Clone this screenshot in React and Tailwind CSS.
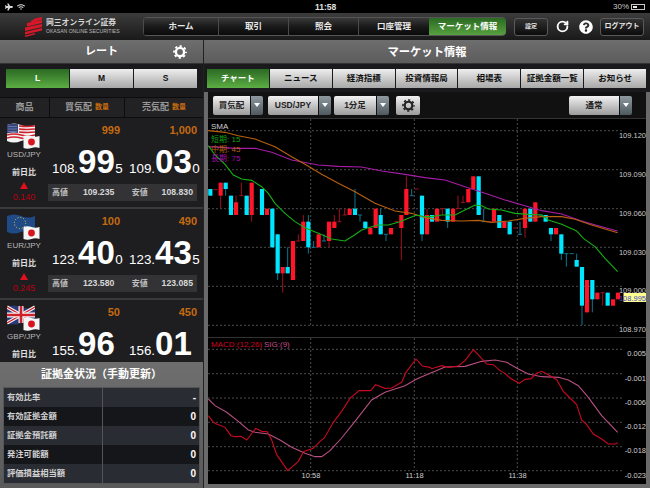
import React from "react";
import { FaPlane, FaWifi, FaQuestionCircle } from "react-icons/fa";
import { RotateCw } from "lucide-react";

// chart points were read off at 3x, so they go through these to page coordinates
const left = ([x, y]) => [205 + x / 3, 115 + y / 3];
const right = ([x, y]) => [425 + x / 3, 115 + y / 3];
const lowLeft = ([x, y]) => [205 + x / 3, 335 + y / 3];
const lowRight = ([x, y]) => [425 + x / 3, 335 + y / 3];
const toLine = (pts) => pts.map((p) => p.join(",")).join(" ");

const greenLine = [
  ...[[10,92],[30,120],[60,148],[85,180],[110,192],[140,196],[170,215],[190,235],[210,265],[240,295],[270,320],[300,338],[340,355],[380,372],[420,378],[445,362],[470,345],[490,338],[520,330],[550,330],[585,320],[610,310],[635,300],[660,305]].map(left),
  ...[[20,305],[50,300],[90,300],[120,285],[150,270],[170,272],[190,282],[230,285],[270,295],[310,298],[350,300],[370,315],[410,328],[455,348],[475,370],[510,395],[540,430],[578,470]].map(right),
];
const orangeLine = [
  ...[[10,47],[60,52],[100,62],[150,72],[210,95],[260,125],[300,148],[350,178],[400,205],[450,230],[510,265],[570,288],[620,295],[660,308]].map(left),
  ...[[50,316],[110,318],[160,316],[200,322],[250,318],[300,310],[350,305],[410,305],[450,313],[500,330],[578,353]].map(right),
];
const purpleLine = [
  ...[[10,95],[90,100],[150,100],[200,112],[260,135],[340,150],[400,154],[470,156],[530,168],[600,178],[660,188]].map(left),
  ...[[60,195],[120,215],[180,235],[240,255],[300,272],[350,287],[410,297],[470,318],[530,335],[578,348]].map(right),
];
const macdLine = [
  ...[[10,245],[25,265],[35,270],[60,280],[78,305],[90,308],[108,307],[125,318],[152,283],[170,292],[187,293],[200,318],[215,362],[248,410],[280,382],[295,353],[325,343],[345,322],[358,312],[385,265],[410,232],[435,193],[462,170],[497,170],[512,152],[540,163],[560,162],[590,145],[603,115],[633,75],[652,96],[675,100]].map(lowLeft),
  ...[[20,104],[50,95],[70,100],[100,96],[120,80],[145,47],[165,68],[185,90],[205,92],[225,110],[240,118],[255,132],[283,148],[300,136],[318,134],[335,118],[350,112],[370,122],[395,137],[415,172],[435,192],[455,212],[470,258],[485,272],[505,300],[530,315],[550,330],[570,330],[578,326]].map(lowRight),
];
const sigLine = [
  ...[[10,195],[30,215],[65,235],[100,262],[130,288],[150,295],[190,300],[225,318],[260,340],[300,358],[330,368],[350,368],[375,350],[410,312],[450,262],[500,198],[540,175],[600,155],[635,135],[675,118]].map(lowLeft),
  ...[[30,112],[60,99],[120,97],[170,82],[210,78],[245,85],[280,105],[310,120],[350,128],[400,130],[430,138],[460,155],[490,190],[530,245],[578,295]].map(lowRight),
];

// color, x, body top, body bottom, wick top, wick bottom
const candlesLeft = [
  ["c",16,222,242,222,242],["r",31,224,224,224,224],["r",47,203,242,203,280],["c",62,203,222,203,242],["c",78,242,300,242,300],
  ["r",93,262,300,242,300],["r",109,242,242,203,242],["c",125,242,300,242,300],["r",140,203,300,203,320],["c",171,222,300,222,300],
  ["r",186,281,300,281,300],["c",202,281,397,281,397],["c",218,358,475,358,495],["r",233,456,475,456,533],["c",248,456,475,397,475],
  ["r",264,378,495,378,495],["r",280,378,378,358,378],["r",295,320,378,300,378],["c",310,320,397,300,416],["c",326,397,397,378,397],
  ["r",341,358,397,358,397],["c",357,378,378,358,378],["r",372,320,378,320,397],["r",388,320,339,300,339],["r",403,320,320,280,320],
  ["r",419,300,300,281,300],["r",434,281,300,281,300],["c",450,281,300,222,300],["c",465,300,300,300,320],["c",481,320,339,320,339],
  ["r",496,339,358,339,358],["r",512,281,339,281,339],["c",527,300,358,281,358],["c",543,358,358,358,378],["r",558,339,358,339,358],
  ["r",574,320,320,320,320],["r",589,300,339,300,435],["r",604,222,300,184,300],["c",620,242,242,222,242],["r",635,222,222,222,222],
  ["c",651,242,358,242,378],["r",666,300,358,281,358],
];
const candlesRight = [
  ["c",21,300,320,300,320],["r",36,281,320,281,320],["r",52,281,281,281,300],["c",68,281,320,281,339],["r",84,281,320,281,320],
  ["r",99,281,281,242,281],["r",114,262,262,242,262],["r",130,222,262,222,262],["r",145,184,222,184,222],["c",161,184,300,184,300],
  ["c",176,320,320,281,320],["r",192,320,320,320,320],["r",207,281,320,281,320],["c",223,300,339,300,339],["r",238,320,339,320,339],
  ["c",254,320,358,320,358],["r",270,339,339,339,339],["c",285,358,358,320,358],["r",300,281,339,281,368],["c",316,281,320,281,320],
  ["r",331,262,320,262,320],["c",347,300,300,300,300],["c",362,300,320,300,320],["c",378,339,358,339,378],["r",393,339,358,339,358],
  ["c",409,358,416,358,435],["c",424,416,416,416,455],["c",440,416,416,416,416],["c",455,435,455,416,455],["c",471,456,572,456,630],
  ["r",486,495,592,495,592],["c",502,495,553,495,592],["r",517,533,553,533,553],["r",533,533,533,533,572],["c",548,533,572,533,572],
  ["r",564,553,572,553,572],["r",579,533,553,533,553],
];

const Candles = ({ data, x0 }) =>
  data.map(([c, x, top, bot, wt, wb], i) => {
    const px = x0 + x / 3;
    const y = (v) => 115 + v / 3;
    const body = c === "r" ? "#ff1428" : "#00e6ff";
    const wick = c === "r" ? "#a01020" : "#0e7590";
    return (
      <g key={i}>
        {wt !== wb && <line x1={px} x2={px} y1={y(wt)} y2={y(wb)} stroke={wick} strokeWidth="1" />}
        {top === bot ? (
          <line x1={px - 2} x2={px + 2} y1={y(top)} y2={y(top)} stroke={wick} strokeWidth="1" />
        ) : (
          <rect x={px - 2.1} y={y(top)} width="4.2" height={y(bot) - y(top)} fill={body} />
        )}
      </g>
    );
  });

const Grid = ({ ys, x0, x1, y0, y1 }) => (
  <g stroke="#4c4c4c" strokeWidth="1" strokeDasharray="2 2">
    {ys.map((y) => (
      <line key={y} x1={x0} x2={x1} y1={y} y2={y} />
    ))}
    {[310.7, 414.3, 517.3].map((x) => (
      <line key={x} x1={x} x2={x} y1={y0} y2={y1} />
    ))}
  </g>
);

const Gear = ({ className, color = "#fff" }) => (
  <svg viewBox="0 0 24 24" className={className}>
    <circle cx="12" cy="12" r="7" fill="none" stroke={color} strokeWidth="4" />
    <circle cx="12" cy="12" r="10.2" fill="none" stroke={color} strokeWidth="3" strokeDasharray="4 4" strokeDashoffset="2" />
  </svg>
);

const Logo = () => (
  <svg viewBox="0 0 18 20" className="w-[18px] h-[20px] shrink-0">
    <polygon points="11,1.5 18,0 18,2.5 7,5.5 7,4" fill="#d81828" />
    <polygon points="3,6 18,3 18,6 3,9.5" fill="#d81828" />
    <polygon points="1,10.5 18,7 18,10 1,14" fill="#d81828" />
    <polygon points="1,15 18,11 18,13.5 1,17.5" fill="#d81828" />
    <polygon points="1,18.5 11,16 11,17.5 1,20" fill="#d81828" />
  </svg>
);

const JpFlag = () => (
  <svg viewBox="0 0 16 14" className="absolute left-[23px] top-[12px] w-[17px] h-[14px]">
    <path d="M0 1 Q4 -0.5 8 1 T16 1 V13 Q12 11.5 8 13 T0 13 Z" fill="#f4f4f4" />
    <circle cx="8" cy="7" r="3.4" fill="#d8141e" />
  </svg>
);

const UsFlag = () => (
  <svg viewBox="0 0 28 20" className="w-[28px] h-[20px]">
    <path d="M0 2 Q7 -1 14 2 T28 2 V18 Q21 15 14 18 T0 18 Z" fill="#f4f4f4" />
    <g stroke="#d0202c" strokeWidth="1.5" fill="none">
      <path d="M12 3 Q20 4 28 3" />
      <path d="M12 6 Q20 7 28 6" />
      <path d="M12 9 Q20 10 28 9" />
      <path d="M0 12 Q7 10 14 12 T28 12" />
      <path d="M0 15 Q7 13 14 15 T28 15" />
    </g>
    <path d="M0 2 Q6 0 11 1.2 V10 Q6 9 0 10.5 Z" fill="#35467e" />
    <path d="M1.5 3.5 H10 M1.5 6 H10 M1.5 8.5 H10" stroke="#a8b0d0" strokeWidth="0.9" strokeDasharray="1 1" />
  </svg>
);

const EuFlag = () => (
  <svg viewBox="0 0 28 20" className="w-[28px] h-[20px]">
    <path d="M0 2 Q7 -1 14 2 T28 2 V18 Q21 15 14 18 T0 18 Z" fill="#1f4a86" />
    <circle cx="13" cy="9" r="5.6" fill="none" stroke="#e8d040" strokeWidth="1" strokeDasharray="1 1.9" />
  </svg>
);

const GbFlag = () => (
  <svg viewBox="0 0 28 20" className="w-[28px] h-[20px]">
    <path d="M0 2 Q7 -1 14 2 T28 2 V18 Q21 15 14 18 T0 18 Z" fill="#2a3a78" />
    <path d="M0 2 L28 18 M28 2 L0 18" stroke="#f4f4f4" strokeWidth="3.4" />
    <path d="M0 2 L28 18 M28 2 L0 18" stroke="#d0202c" strokeWidth="1.2" />
    <path d="M14 1 V18 M0 10 H28" stroke="#f4f4f4" strokeWidth="5" />
    <path d="M14 1 V18 M0 10 H28" stroke="#d0202c" strokeWidth="2.6" />
  </svg>
);

const Price = ({ head, big, tail, w }) => (
  <div className={`flex items-baseline font-bold text-white ${w}`}>
    <span className="text-[13.4px] leading-none font-normal">{head}</span>
    <span className="text-[33px] leading-none tracking-[0.2px]">{big}</span>
    <span className="text-[13.4px] leading-none font-normal">{tail}</span>
  </div>
);

const RateRow = ({ flag, pair, sellQty, buyQty, sell, buy, change, high, low, cut }) => (
  <div className={`flex shrink-0 bg-[#1e1e20] ${cut ? "h-[62px] overflow-hidden" : "h-[91px] border-b-2 border-[#3a3a3a]"}`}>
    <div className="w-[48px] flex flex-col items-center shrink-0 pt-[5px]">
      <div className="relative h-[25px] w-[40px] pl-[7px] self-start shrink-0">
        {flag}
        <JpFlag />
      </div>
      <div className="text-[8px] leading-[10px] text-[#b8b8b8] mt-[2px] shrink-0">{pair}</div>
      <div className="text-[8px] leading-[11px] font-bold text-[#e0e0e0] mt-[7px] shrink-0">前日比</div>
      {!cut && (
        <>
          <div className="w-0 h-0 border-l-[4px] border-r-[4px] border-b-[7px] border-l-transparent border-r-transparent border-b-[#e0101c] mt-[4px]" />
          <div className="text-[9px] leading-[10px] text-[#b80010] mt-[3px]">{change}</div>
        </>
      )}
    </div>
    <div className="flex-1 pt-[5px]">
      <div className="flex text-[11px] leading-[14px] font-bold text-[#c46a10]">
        <div className="w-[72px] text-right">{sellQty}</div>
        <div className="w-[77px] text-right">{buyQty}</div>
      </div>
      <div className="flex mt-[8px] ml-[4px] h-[33px]">
        <Price {...sell} w="w-[77px]" />
        <Price {...buy} w="w-[72px]" />
      </div>
      {!cut && (
        <div className="mt-[6px] w-[149px] h-[17px] bg-[#333335] flex items-center px-[4px] text-[8px] font-bold text-[#d8d8d8]">
          <span className="w-[31px] text-[#c0c0c0]">高値</span>
          <span className="w-[49px] text-[8.7px]">{high}</span>
          <span className="w-[30px] text-[#c0c0c0]">安値</span>
          <span className="text-[8.7px]">{low}</span>
        </div>
      )}
    </div>
  </div>
);

const Select = ({ label, w }) => (
  <div className={`flex h-[19px] rounded-[2px] overflow-hidden shrink-0 ${w}`}>
    <div className="flex-1 bg-linear-to-b from-[#f2f2f2] to-[#9c9c9c] text-[8.5px] font-bold text-[#222] flex items-center justify-center">
      {label}
    </div>
    <div className="w-[12px] ml-[1px] bg-linear-to-b from-[#8e9aa0] to-[#4e5a60] flex items-center justify-center">
      <div className="w-0 h-0 border-l-[3px] border-r-[3px] border-t-[4px] border-l-transparent border-r-transparent border-t-white" />
    </div>
  </div>
);

const navItems = [
  ["ホーム", "w-[75px]"],
  ["取引", "w-[70px]"],
  ["照会", "w-[70px]"],
  ["口座管理", "w-[71px]"],
];
const subTabs = ["ニュース", "経済指標", "投資情報局", "相場表", "証拠金額一覧", "お知らせ"];
const margins = [
  ["有効比率", "-"],
  ["有効証拠金額", "0"],
  ["証拠金預託額", "0"],
  ["発注可能額", "0"],
  ["評価損益相当額", "0"],
];

const mainLabels = [["109.120", 135], ["109.090", 174], ["109.060", 213], ["109.030", 252], ["109.000", 290.5], ["108.970", 329.5]];
const lowLabels = [["0.005", 354.5], ["-0.001", 379], ["-0.006", 403.5], ["-0.012", 427.5], ["-0.018", 451.5], ["-0.023", 476]];

const App = () => {
  return (
    <div className="w-[650px] h-[488px] overflow-hidden bg-black flex flex-col font-['Liberation_Sans','Noto_Sans_CJK_JP',sans-serif]">
      {/* status bar */}
      <div className="h-[13px] bg-black flex items-center justify-between px-[5px] text-[8px] text-[#c8c8c8] relative shrink-0">
        <div className="flex items-center gap-[4px] text-[#d8d8d8]">
          <FaPlane className="w-[8px] h-[8px]" />
          <FaWifi className="w-[8px] h-[8px]" />
        </div>
        <div className="absolute left-[315px] top-[1px] text-[8.5px] leading-[12px] font-bold text-[#e0e0e0]">11:58</div>
        <div className="flex items-center gap-[2px]">
          <span>30%</span>
          <div className="w-[14px] h-[6px] border border-[#c8c8c8] p-px">
            <div className="w-[4px] h-full bg-[#e8e8e8]" />
          </div>
        </div>
      </div>

      {/* header */}
      <div className="h-[27px] shrink-0 bg-linear-to-b from-[#3c3c3c] to-[#1a1a1a] flex items-center">
        <div className="w-[143px] pl-[24px] flex items-center gap-[4px] shrink-0">
          <Logo />
          <div className="flex flex-col">
            <span className="text-[7.8px] leading-[10px] font-bold text-[#d8d8d8] whitespace-nowrap">岡三オンライン証券</span>
            <span className="text-[5.1px] leading-[7px] text-[#b8b8b8] whitespace-nowrap">OKASAN ONLINE SECURITIES</span>
          </div>
        </div>
        <div className="flex h-[19px] rounded-[4px] overflow-hidden border-y border-[#555] shrink-0">
          {navItems.map(([t, w]) => (
            <div key={t} className={`${w} bg-linear-to-b from-[#3a3a3a] via-[#1a1a1a] to-[#0a0a0a] border-l border-[#4a4a4a] text-[8.5px] font-bold text-[#e8e8e8] flex items-center justify-center`}>
              {t}
            </div>
          ))}
          <div className="w-[77px] bg-linear-to-b from-[#2a6a22] to-[#58a040] text-[8.5px] font-bold text-white flex items-center justify-center">
            マーケット情報
          </div>
        </div>
        <div className="ml-[8px] w-[34px] h-[18px] rounded-[3px] border border-[#5a5a5a] bg-linear-to-b from-[#333] to-[#0c0c0c] text-[6px] font-bold text-[#e0e0e0] flex items-center justify-center shrink-0">
          設定
        </div>
        <RotateCw className="ml-[8px] w-[13px] h-[13px] text-white shrink-0" strokeWidth={3.5} />
        <FaQuestionCircle className="ml-[10px] w-[14px] h-[14px] text-white shrink-0" />
        <div className="ml-[7px] w-[44px] h-[18px] rounded-[3px] border border-[#5a5a5a] bg-linear-to-b from-[#333] to-[#0c0c0c] text-[7px] font-bold text-[#e8e8e8] flex items-center justify-center shrink-0">
          ログアウト
        </div>
      </div>

      <div className="flex flex-1 min-h-0">
        {/* left panel */}
        <div className="w-[203px] shrink-0 flex flex-col bg-[#1e1e20]">
          <div className="h-[24px] shrink-0 bg-linear-to-b from-[#6e6e6e] to-[#5c5c5c] border-b border-[#333] flex items-center relative">
            <span className="ml-[85px] text-[11px] font-bold text-white">レート</span>
            <Gear className="absolute left-[173px] top-[5px] w-[14px] h-[14px]" />
          </div>
          <div className="h-[33px] shrink-0 pt-[5px] pl-[6px] bg-[#1a1a1c]">
            <div className="flex w-[191px] h-[19px] gap-px">
              <div className="flex-1 bg-linear-to-b from-[#2c6a24] to-[#5cae44] text-[8.5px] font-bold text-white flex items-center justify-center">L</div>
              <div className="flex-1 bg-linear-to-b from-[#eee] to-[#a8a8a8] text-[8.5px] font-bold text-[#111] flex items-center justify-center">M</div>
              <div className="flex-1 bg-linear-to-b from-[#eee] to-[#a8a8a8] text-[8.5px] font-bold text-[#111] flex items-center justify-center">S</div>
            </div>
          </div>
          <div className="h-[21px] shrink-0 flex text-[9px] font-bold text-[#9a9a9a] border-y border-[#0c0c0c] bg-[#222224]">
            <div className="w-[50px] flex items-center justify-center border-r border-[#0c0c0c]">商品</div>
            <div className="w-[75px] flex items-center justify-center gap-[3px] border-r border-[#0c0c0c]">
              買気配<span className="text-[7px] text-[#c46a10]">数量</span>
            </div>
            <div className="flex-1 flex items-center justify-center gap-[3px]">
              売気配<span className="text-[7px] text-[#c46a10]">数量</span>
            </div>
          </div>
          <RateRow
            flag={<UsFlag />}
            pair="USD/JPY"
            sellQty="999"
            buyQty="1,000"
            sell={{ head: "108.", big: "99", tail: "5" }}
            buy={{ head: "109.", big: "03", tail: "0" }}
            change="0.140"
            high="109.235"
            low="108.830"
          />
          <RateRow
            flag={<EuFlag />}
            pair="EUR/JPY"
            sellQty="100"
            buyQty="490"
            sell={{ head: "123.", big: "40", tail: "0" }}
            buy={{ head: "123.", big: "43", tail: "5" }}
            change="0.245"
            high="123.580"
            low="123.085"
          />
          <RateRow
            cut
            flag={<GbFlag />}
            pair="GBP/JPY"
            sellQty="50"
            buyQty="450"
            sell={{ head: "155.", big: "96", tail: "" }}
            buy={{ head: "156.", big: "01", tail: "" }}
            change=""
          />
          <div className="flex-1 bg-linear-to-b from-[#6e6e6e] to-[#5a5a5a] flex flex-col">
            <div className="h-[25px] shrink-0 flex items-center justify-center text-[11px] font-bold text-white">
              証拠金状況（手動更新）
            </div>
            <div className="mx-[3px] border border-[#555] relative">
              {margins.map(([name, val], i) => (
                <div key={name} className={`h-[19px] flex items-center justify-between px-[3px] ${i % 2 === 0 ? "bg-[#2a2c33]" : "bg-[#15161a]"}`}>
                  <span className="text-[8.3px] font-bold text-[#d0d0d0]">{name}</span>
                  <span className="text-[10px] font-bold text-white">{val}</span>
                </div>
              ))}
              <div className="absolute left-[98px] top-0 bottom-0 w-px bg-[#555]" />
            </div>
          </div>
        </div>

        <div className="w-px bg-[#222] shrink-0" />

        {/* right panel */}
        <div className="flex-1 min-w-0 flex flex-col bg-[#6a6a6a]">
          <div className="h-[24px] shrink-0 bg-linear-to-b from-[#6e6e6e] to-[#5c5c5c] border-b border-[#333] flex items-center justify-center pt-px text-[11.3px] font-bold text-white">
            マーケット情報
          </div>
          <div className="h-[28px] shrink-0 bg-[#1a1a1c] pt-[5px] pl-[3px]">
            <div className="grid grid-cols-7 gap-px w-[439px] h-[19px]">
              <div className="bg-linear-to-b from-[#2c6a24] to-[#5cae44] text-[8.5px] font-bold text-white flex items-center justify-center">チャート</div>
              {subTabs.map((t) => (
                <div key={t} className="bg-linear-to-b from-[#eee] to-[#a8a8a8] text-[8.5px] font-bold text-[#111] flex items-center justify-center whitespace-nowrap">
                  {t}
                </div>
              ))}
            </div>
          </div>
          <div className="h-[26px] shrink-0 mx-[4px] bg-[#111] flex items-center pl-[5px]">
            <Select label="買気配" w="w-[50px]" />
            <Select label="USD/JPY" w="w-[63px] ml-[5px]" />
            <Select label="1分足" w="w-[55px] ml-[3px]" />
            <div className="ml-[7px] w-[24px] h-[19px] rounded-[2px] bg-linear-to-b from-[#f2f2f2] to-[#9c9c9c] flex items-center justify-center">
              <Gear className="w-[13px] h-[13px]" color="#222" />
            </div>
            <Select label="通常" w="w-[63px] ml-[149px]" />
          </div>
          <div className="mx-[4px] h-[219px] shrink-0 bg-black border-t border-[#333]">
            <svg viewBox="208 119 438 218" className="w-[438px] h-[218px] block">
              <Grid ys={[130.7, 169.7, 208.7, 247.3, 286.3, 325.3]} x0={208} x1={623} y0={119} y1={325.3} />
              <Candles data={candlesLeft} x0={205} />
              <Candles data={candlesRight} x0={425} />
              <polyline points={toLine(purpleLine)} fill="none" stroke="#a81ca8" strokeWidth="1.1" />
              <polyline points={toLine(orangeLine)} fill="none" stroke="#b8600e" strokeWidth="1.1" />
              <polyline points={toLine(greenLine)} fill="none" stroke="#14b014" strokeWidth="1.1" />
              <text x="211" y="129" fontSize="8" fill="#d0d0d0">SMA</text>
              <text x="211" y="142" fontSize="8" fill="#12a012">短期: 15</text>
              <text x="211" y="151.5" fontSize="8" fill="#b8600e">中期: 45</text>
              <text x="211" y="161" fontSize="8" fill="#a010a8">長期: 75</text>
              {mainLabels.map(([t, y]) => (
                <text key={t} x="646" y={y + 2.5} fontSize="7.5" fill="#c8c8c8" textAnchor="end">{t}</text>
              ))}
              <rect x="623.5" y="293" width="22.5" height="9" fill="#ffff90" />
              <text x="646" y="300.5" fontSize="7.5" fill="#4848c0" textAnchor="end">108.995</text>
            </svg>
          </div>
          <div className="mx-[4px] h-[147px] shrink-0 bg-black border-t border-[#333]">
            <svg viewBox="208 339 438 146" className="w-[438px] h-[146px] block">
              <Grid ys={[350.3, 374.7, 399, 423.3, 447.7, 471.7]} x0={208} x1={623} y0={339} y1={471.7} />
              <polyline points={toLine(sigLine)} fill="none" stroke="#b85080" strokeWidth="1.1" />
              <polyline points={toLine(macdLine)} fill="none" stroke="#c80a20" strokeWidth="1.1" />
              <text x="211" y="348" fontSize="8" fill="#d00020">MACD:(12,26)</text>
              <text x="264" y="348" fontSize="8" fill="#c05088">SIG:(9)</text>
              {lowLabels.map(([t, y]) => (
                <text key={t} x="646" y={y + 2.5} fontSize="7.5" fill="#d0d0d0" textAnchor="end">{t}</text>
              ))}
              <text x="311" y="478.5" fontSize="7.5" fill="#d0d0d0" textAnchor="middle">10:58</text>
              <text x="414.5" y="478.5" fontSize="7.5" fill="#d0d0d0" textAnchor="middle">11:18</text>
              <text x="517.5" y="478.5" fontSize="7.5" fill="#d0d0d0" textAnchor="middle">11:38</text>
            </svg>
          </div>
        </div>
      </div>
    </div>
  );
};

export default App;
